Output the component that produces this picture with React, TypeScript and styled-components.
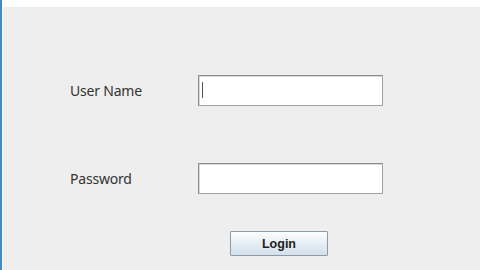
import styled, { createGlobalStyle } from "styled-components";

const GlobalStyle = createGlobalStyle`
  html, body {
    margin: 0;
    padding: 0;
    width: 480px;
    height: 270px;
    overflow: hidden;
    background: #eeeeee;
  }
`

const Window = styled.div`
  width: 480px;
  height: 270px;
  display: flex;
  flex-direction: column;
  background: #eeeeee;
  border-left: 2px solid #3b8cc4;
  box-sizing: border-box;
`

const TitleStrip = styled.div`
  height: 7px;
  flex: none;
  background: #ffffff;
`

const Content = styled.div`
  flex: 1;
  display: flex;
  flex-direction: column;
  padding: 67px 0 0 67px;
  border-left: 1px solid #f7f7f7;
`

const Row = styled.div<{ gap: number }>`
  display: flex;
  align-items: center;
  height: 32px;
  margin-bottom: ${p => p.gap}px;
`

const Label = styled.span`
  width: 128px;
  font-family: "Noto Sans", "Open Sans", sans-serif;
  font-size: 14px;
  color: #333333;
  letter-spacing: -0.2px;
`

const Field = styled.div`
  width: 185px;
  height: 31px;
  box-sizing: border-box;
  background: #ffffff;
  border: 1px solid #a2a2a2;
  border-top-color: #8c8c8c;
  border-left-color: #8c8c8c;
  box-shadow: inset 1px 1px 0 #dcdcdc;
  position: relative;
`

const Caret = styled.span`
  position: absolute;
  left: 3px;
  top: 6px;
  width: 1px;
  height: 16px;
  background: #555555;
`

const ButtonRow = styled.div`
  display: flex;
  padding-left: 160px;
  margin-top: 37px;
`

const Button = styled.button`
  width: 98px;
  height: 25px;
  box-sizing: border-box;
  border: 1px solid #8d9ba6;
  border-radius: 1px;
  background: linear-gradient(#fdfeff 0%, #e8eff5 45%, #d3dfe9 100%);
  font-family: "Liberation Sans", Arial, sans-serif;
  font-weight: bold;
  font-size: 12.5px;
  color: #222222;
  padding: 0;
`

export default function App() {
  return (
    <>
      <GlobalStyle />
      <Window>
        <TitleStrip />
        <Content>
          <Row gap={56}>
            <Label>User Name</Label>
            <Field>
              <Caret />
            </Field>
          </Row>
          <Row gap={0}>
            <Label>Password</Label>
            <Field />
          </Row>
          <ButtonRow>
            <Button>Login</Button>
          </ButtonRow>
        </Content>
      </Window>
    </>
  );
}
